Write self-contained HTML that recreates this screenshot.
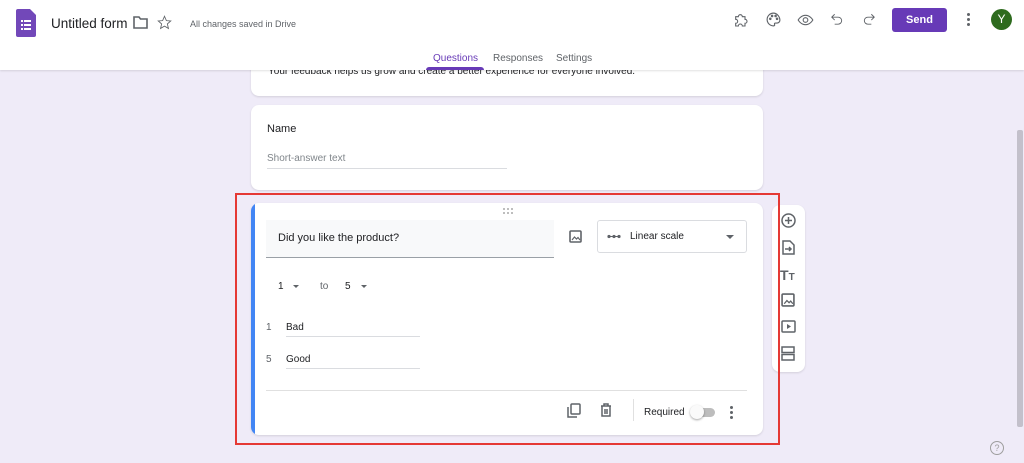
<!DOCTYPE html>
<html><head><meta charset="utf-8"><style>
*{box-sizing:border-box;margin:0;padding:0}
body{width:1024px;height:463px;overflow:hidden;background:#efebf8;font-family:"Liberation Sans",Arial,sans-serif;color:#202124;position:relative}
.abs{position:absolute}
.hdr{position:absolute;left:0;top:0;width:1024px;height:70px;background:#fff;box-shadow:0 1px 2px rgba(0,0,0,.12);z-index:5}
.card{position:absolute;background:#fff;border-radius:8px;box-shadow:0 1px 2px rgba(0,0,0,.12)}
.ic{position:absolute;fill:none;stroke:#5f6368;stroke-width:1.8}
.t{position:absolute;white-space:nowrap}
</style></head><body>
<div class="hdr">
  <svg class="abs" style="left:16px;top:9px" width="20" height="28" viewBox="0 0 20 28"><path d="M2 0h12l6 6v20a2 2 0 0 1-2 2H2a2 2 0 0 1-2-2V2a2 2 0 0 1 2-2z" fill="#7248b9"/><g fill="#fff"><rect x="5" y="11" width="2" height="2"/><rect x="8" y="11" width="7" height="2"/><rect x="5" y="15" width="2" height="2"/><rect x="8" y="15" width="7" height="2"/><rect x="5" y="19" width="2" height="2"/><rect x="8" y="19" width="7" height="2"/></g></svg>
  <div class="t" style="left:51px;top:16px;font-size:13.5px;color:#202124">Untitled form</div>
  <svg class="ic" style="left:133px;top:16px;stroke-width:1.6" width="15" height="13" viewBox="0 0 15 13"><path d="M1 1h5l1.5 2H14v9H1z"/></svg>
  <svg class="ic" style="left:157px;top:15px;stroke-width:1.4" width="15" height="15" viewBox="0 0 24 24"><path d="M12 2l3 7 7 .6-5.4 4.7 1.7 7.2L12 17.8 5.7 21.5l1.7-7.2L2 9.6 9 9z"/></svg>
  <div class="t" style="left:190px;top:19px;font-size:9px;color:#5f6368">All changes saved in Drive</div>

  <svg class="ic" style="left:733px;top:12px;stroke-width:1.6" width="16" height="16" viewBox="0 0 24 24"><path d="M4 7h4a3 3 0 1 1 6 0h4v4a3 3 0 1 1 0 6v4h-4a3 3 0 1 0-6 0H4v-4a3 3 0 1 0 0-6z"/></svg>
  <svg class="ic" style="left:765px;top:11px;stroke-width:1.6" width="17" height="17" viewBox="0 0 24 24"><path d="M12 3a9 9 0 0 0 0 18c1.5 0 2-1 1.5-2s0-2 1.5-2H17a4 4 0 0 0 4-4c0-5-4-10-9-10z"/><circle cx="7.5" cy="11" r="1"/><circle cx="10" cy="7" r="1"/><circle cx="15" cy="7" r="1"/><circle cx="17" cy="11" r="1"/></svg>
  <svg class="ic" style="left:797px;top:12px;stroke-width:1.6" width="17" height="16" viewBox="0 0 24 24"><path d="M1 12s4-7 11-7 11 7 11 7-4 7-11 7S1 12 1 12z"/><circle cx="12" cy="12" r="3.5"/></svg>
  <svg class="ic" style="left:830px;top:12px;stroke-width:1.6" width="14" height="15" viewBox="0 0 24 24"><path d="M8 3L3 8l5 5M3 8h11a6 6 0 0 1 0 12H8"/></svg>
  <svg class="ic" style="left:862px;top:12px;stroke-width:1.6" width="14" height="15" viewBox="0 0 24 24"><path d="M16 3l5 5-5 5M21 8H10a6 6 0 0 0 0 12h6"/></svg>
  <div class="abs" style="left:892px;top:8px;width:55px;height:24px;background:#673ab7;border-radius:3px;color:#fff;font-size:11px;font-weight:bold;text-align:center;line-height:24px">Send</div>
  <div class="abs" style="left:967px;top:13px;width:3px;height:3px;background:#5f6368;border-radius:50%;box-shadow:0 5px 0 #5f6368,0 10px 0 #5f6368"></div>
  <div class="abs" style="left:991px;top:9px;width:21px;height:21px;background:#2e6b1e;border-radius:50%;color:#fff;font-size:12px;text-align:center;line-height:21px">Y</div>

  <div class="t" style="left:433px;top:53px;font-size:10px;color:#673ab7">Questions</div>
  <div class="abs" style="left:426px;top:67px;width:58px;height:3px;background:#673ab7;border-radius:3px 3px 0 0"></div>
  <div class="t" style="left:493px;top:53px;font-size:10px;color:#5f6368">Responses</div>
  <div class="t" style="left:556px;top:53px;font-size:10px;color:#5f6368">Settings</div>
</div>

<div class="card" style="left:251px;top:60px;width:512px;height:36px">
  <div class="t" style="left:17px;top:6px;font-size:10px;color:#202124">Your feedback helps us grow and create a better experience for everyone involved.</div>
</div>

<div class="card" style="left:251px;top:105px;width:512px;height:85px">
  <div class="t" style="left:16px;top:18px;font-size:11px">Name</div>
  <div class="t" style="left:16px;top:48px;font-size:10px;color:#80868b">Short-answer text</div>
  <div class="abs" style="left:16px;top:63px;width:240px;height:1px;background:#dadce0"></div>
</div>

<div class="card" style="left:251px;top:203px;width:512px;height:232px;overflow:hidden">
  <div class="abs" style="left:0;top:0;width:4px;height:232px;background:#4285f4"></div>
  <svg class="abs" style="left:252px;top:5px" width="10" height="6" viewBox="0 0 10 6" fill="#aaa"><circle cx="1" cy="1" r="1"/><circle cx="5" cy="1" r="1"/><circle cx="9" cy="1" r="1"/><circle cx="1" cy="5" r="1"/><circle cx="5" cy="5" r="1"/><circle cx="9" cy="5" r="1"/></svg>
  <div class="abs" style="left:15px;top:17px;width:288px;height:38px;background:#f8f9fa;border-bottom:1px solid #9aa0a6"></div>
  <div class="t" style="left:27px;top:29px;font-size:11px">Did you like the product?</div>
  <svg class="ic" style="left:318px;top:27px;stroke-width:1.6" width="13" height="13" viewBox="0 0 13 13"><rect x="1" y="1" width="11" height="11" rx="1"/><path d="M3 10l2.5-3 2 2 1.5-1.5L11 10" stroke-width="1.2"/></svg>
  <div class="abs" style="left:346px;top:17px;width:150px;height:33px;border:1px solid #dadce0;border-radius:3px"></div>
  <svg class="abs" style="left:356px;top:31px" width="14" height="5" viewBox="0 0 14 5"><path d="M1 2.5h12" stroke="#5f6368" stroke-width="1"/><circle cx="2" cy="2.5" r="1.6" fill="#5f6368"/><circle cx="7" cy="2.5" r="1.6" fill="#5f6368"/><circle cx="12" cy="2.5" r="1.6" fill="#5f6368"/></svg>
  <div class="t" style="left:379px;top:28px;font-size:10px">Linear scale</div>
  <div class="abs" style="left:475px;top:32px;border:4px solid transparent;border-top:4px solid #5f6368;border-bottom:0"></div>
  <div class="t" style="left:27px;top:78px;font-size:10px">1</div>
  <div class="abs" style="left:42px;top:82px;border:3.5px solid transparent;border-top:3.5px solid #5f6368;border-bottom:0"></div>
  <div class="t" style="left:69px;top:78px;font-size:10px;color:#5f6368">to</div>
  <div class="t" style="left:94px;top:78px;font-size:10px">5</div>
  <div class="abs" style="left:110px;top:82px;border:3.5px solid transparent;border-top:3.5px solid #5f6368;border-bottom:0"></div>
  <div class="t" style="left:15px;top:119px;font-size:10px;color:#5f6368">1</div>
  <div class="t" style="left:35px;top:119px;font-size:10px">Bad</div>
  <div class="abs" style="left:35px;top:133px;width:134px;height:1px;background:#dadce0"></div>
  <div class="t" style="left:15px;top:151px;font-size:10px;color:#5f6368">5</div>
  <div class="t" style="left:35px;top:151px;font-size:10px">Good</div>
  <div class="abs" style="left:35px;top:165px;width:134px;height:1px;background:#dadce0"></div>
  <div class="abs" style="left:15px;top:187px;width:481px;height:1px;background:#e0e0e0"></div>
  <svg class="ic" style="left:316px;top:200px;stroke-width:1.5" width="14" height="15" viewBox="0 0 14 15"><rect x="4" y="1" width="9" height="10" rx="1"/><path d="M1 4v10h9"/></svg>
  <svg class="ic" style="left:349px;top:200px;stroke-width:1.5" width="12" height="14" viewBox="0 0 12 14"><path d="M1 3h10M4 3V1h4v2M2 3v10h8V3M5 6v5M7 6v5"/></svg>
  <div class="abs" style="left:382px;top:196px;width:1px;height:22px;background:#e0e0e0"></div>
  <div class="t" style="left:393px;top:204px;font-size:10px">Required</div>
  <div class="abs" style="left:443px;top:205px;width:21px;height:9px;border-radius:5px;background:#bdbdbd"></div>
  <div class="abs" style="left:439px;top:202px;width:14px;height:14px;border-radius:50%;background:#fafafa;box-shadow:0 1px 2px rgba(0,0,0,.35)"></div>
  <div class="abs" style="left:479px;top:203px;width:3px;height:3px;background:#5f6368;border-radius:50%;box-shadow:0 5px 0 #5f6368,0 10px 0 #5f6368"></div>
</div>

<div class="card" style="left:772px;top:205px;width:33px;height:167px"></div>
<svg class="ic" style="left:781px;top:213px;stroke-width:1.5" width="15" height="15" viewBox="0 0 15 15"><circle cx="7.5" cy="7.5" r="6.5"/><path d="M7.5 4v7M4 7.5h7"/></svg>
<svg class="ic" style="left:782px;top:240px;stroke-width:1.5" width="13" height="15" viewBox="0 0 13 15"><path d="M1 1h7l4 4v9H1z"/><path d="M3 9h6M7 7l2 2-2 2"/></svg>
<div class="t" style="left:780px;top:267px;font-size:14px;font-weight:bold;color:#5f6368">T<span style="font-size:10px">T</span></div>
<svg class="ic" style="left:781px;top:293px;stroke-width:1.5" width="14" height="14" viewBox="0 0 13 13"><rect x="1" y="1" width="11" height="11" rx="1"/><path d="M3 10l2.5-3 2 2 1.5-1.5L11 10" stroke-width="1.2"/></svg>
<svg class="ic" style="left:781px;top:320px;stroke-width:1.5" width="15" height="13" viewBox="0 0 15 13"><rect x="1" y="1" width="13" height="11" rx="1"/><path d="M6 4v5l4-2.5z" fill="#5f6368" stroke="none"/></svg>
<svg class="ic" style="left:781px;top:346px;stroke-width:1.5" width="14" height="15" viewBox="0 0 14 15"><rect x="1" y="1" width="12" height="5.5"/><rect x="1" y="8.5" width="12" height="5.5"/></svg>

<div class="abs" style="left:235px;top:193px;width:545px;height:252px;border:2.5px solid #e53935"></div>

<div class="abs" style="left:1017px;top:130px;width:6px;height:297px;background:#c3c0cb;border-radius:2px"></div>
<div class="abs" style="left:990px;top:441px;width:14px;height:14px;border:1.3px solid #9e9e9e;border-radius:50%;color:#9e9e9e;font-size:9px;text-align:center;line-height:12px">?</div>
</body></html>
